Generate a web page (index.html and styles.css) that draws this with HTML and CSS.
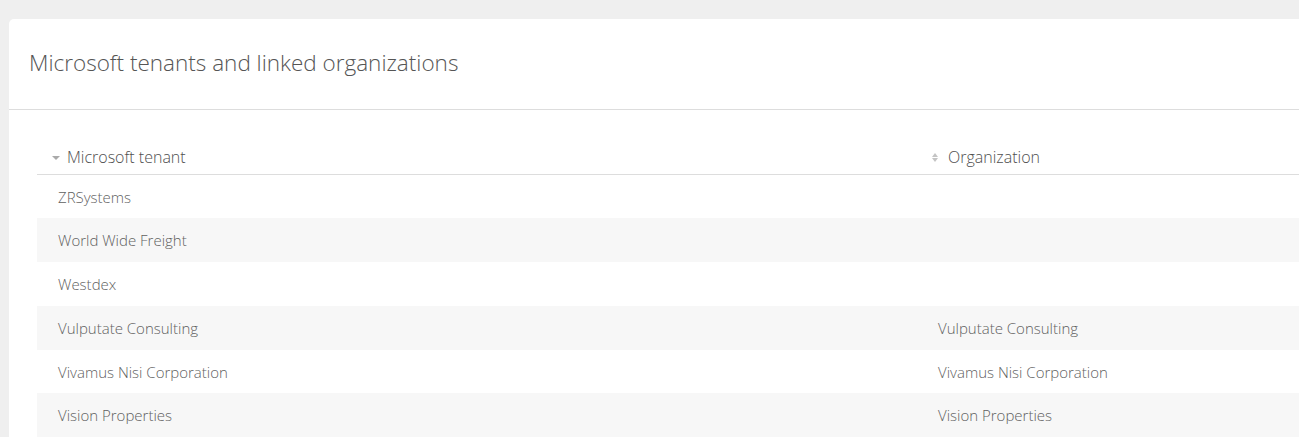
FILE: index.html
```html
<!DOCTYPE html>
<html>
<head>
<meta charset="utf-8">
<link rel="stylesheet" href="styles.css">
</head>
<body>
<div class="viewport">
  <div class="card">
    <div class="card-header">
      <h1 class="card-title">Microsoft tenants and linked organizations</h1>
    </div>
    <div class="card-body">
      <table class="grid">
        <colgroup>
          <col class="col-tenant">
          <col>
        </colgroup>
        <thead>
          <tr>
            <th><span class="sort sort-desc"></span>Microsoft tenant</th>
            <th><span class="sort sort-both"></span>Organization</th>
          </tr>
        </thead>
        <tbody>
          <tr><td>ZRSystems</td><td></td></tr>
          <tr><td>World Wide Freight</td><td></td></tr>
          <tr><td>Westdex</td><td></td></tr>
          <tr><td>Vulputate Consulting</td><td>Vulputate Consulting</td></tr>
          <tr><td>Vivamus Nisi Corporation</td><td>Vivamus Nisi Corporation</td></tr>
          <tr><td>Vision Properties</td><td>Vision Properties</td></tr>
        </tbody>
      </table>
    </div>
  </div>
</div>
</body>
</html>
```

FILE: styles.css
```css
html, body {
  margin: 0;
  padding: 0;
  background: #ffffff;
}
body {
  font-family: "Open Sans", "Liberation Sans", sans-serif;
  color: #666666;
}
.viewport {
  width: 1290px;
  height: 418px;
  padding: 19px 0 0 9px;
  background: #efefef;
  overflow: hidden;
}
.card {
  background: #ffffff;
  border-top-left-radius: 5px;
  height: 100%;
}
.card-header {
  padding: 29px 20px 31px;
  border-bottom: 1px solid #dddddd;
}
.card-title {
  margin: 0;
  font-size: 22.5px;
  line-height: 30px;
  font-weight: 300;
  color: #555555;
}
.card-body {
  padding: 28px 0 0 28px;
}
.grid {
  width: 100%;
  border-collapse: collapse;
  font-size: 15px;
}
.col-tenant {
  width: 880px;
}
.grid th {
  text-align: left;
  font-weight: 300;
  font-size: 16px;
  line-height: 20px;
  color: #4f4f4f;
  padding: 9px 15px 7px;
  border-bottom: 1px solid #dddddd;
  white-space: nowrap;
}
.sort {
  display: inline-block;
  position: relative;
  vertical-align: middle;
  margin-right: 7px;
}
.sort-desc {
  width: 0;
  height: 0;
  border-left: 4.5px solid transparent;
  border-right: 4.5px solid transparent;
  border-top: 4px solid #aaaaaa;
  margin-top: -1px;
}
.sort-both {
  width: 6px;
  height: 9px;
  margin-right: 10px;
  margin-top: -3px;
}
.sort-both::before,
.sort-both::after {
  content: "";
  position: absolute;
  left: 0;
  border-left: 3px solid transparent;
  border-right: 3px solid transparent;
}
.sort-both::before {
  top: 0;
  border-bottom: 4px solid #c4c4c4;
}
.sort-both::after {
  bottom: 0;
  border-top: 4px solid #c4c4c4;
}
.grid td {
  height: 43.8px;
  box-sizing: border-box;
  padding: 0 21px;
  line-height: 20px;
  font-weight: 300;
  color: #5f5f5f;
}
.grid tbody tr:nth-child(even) td {
  background: #f7f7f7;
}
```
